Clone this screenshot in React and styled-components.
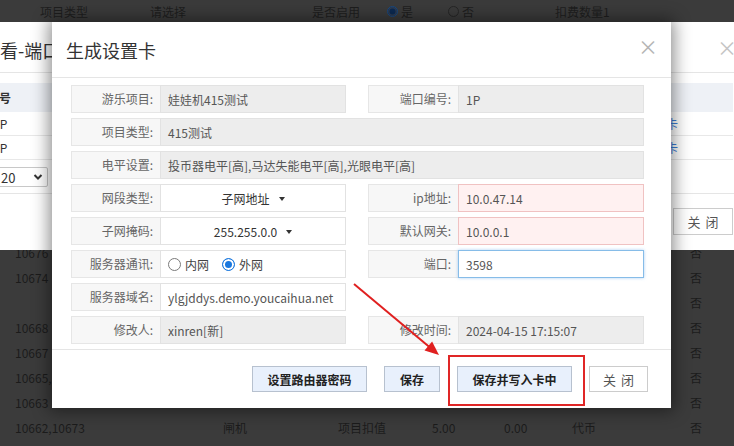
import React from 'react';
import styled, { createGlobalStyle } from 'styled-components';

const FONT = `"Noto Sans CJK SC", "Microsoft YaHei", sans-serif`;

const GlobalStyle = createGlobalStyle`
  html, body { margin: 0; padding: 0; }
  body { background: #3b3b3b; font-family: ${FONT}; font-size: 12px; overflow: hidden; }
  * { box-sizing: border-box; }
`;

const Screen = styled.div`
  position: relative;
  width: 734px;
  height: 446px;
  overflow: hidden;
  background: #3b3b3b;
  color: #1c1c1c;
`;

/* ---------- background page (under overlay) ---------- */
const BgStrip = styled.div`
  height: 22px;
  display: grid;
  grid-template-columns: 40px 110px 162px 75px 61px 107px auto;
  align-items: center;
  color: #1e1e1e;
`;

const StripRadio = styled.span`
  display: inline-flex;
  align-items: center;
  gap: 3px;
`;

const DarkDot = styled.span`
  width: 11px;
  height: 11px;
  border-radius: 50%;
  border: 1px solid ${p => (p.$on ? '#1d4a80' : '#262626')};
  background: ${p => (p.$on ? '#0c2a52' : 'transparent')};
  box-shadow: ${p => (p.$on ? 'inset 0 0 0 1.5px #2f3d52' : 'none')};
`;

const BgTable = styled.div`
  padding-top: 218px;
`;

const BgRow = styled.div`
  height: 25px;
  display: grid;
  grid-template-columns: 15px 208px 115px 94px 72px 68px 118px auto;
  align-items: center;
  color: #1b1b1b;
`;

/* ---------- background dialog ---------- */
const BackDialog = styled.div`
  position: absolute;
  left: -32px;
  top: 22px;
  width: 779px;
  height: 228px;
  background: #fff;
  display: flex;
  flex-direction: column;
`;

const BackHeader = styled.div`
  height: 51px;
  flex: none;
  padding: 5px 10px 0 14px;
  display: flex;
  align-items: center;
  justify-content: space-between;
  border-bottom: 1px solid #e5e5e5;
  font-size: 18px;
  color: #333;
`;

const BackClose = styled.span`
  font-size: 20px;
  color: #c4c4c4;
  margin-bottom: 4px;
`;

const BackBody = styled.div`
  padding: 10px 14px 0;
`;

const BackTable = styled.div`
  display: grid;
  grid-template-columns: 110px 1fr 120px;
`;

const BackCell = styled.div`
  height: ${p => (p.$head ? 29 : 24)}px;
  display: flex;
  align-items: center;
  padding-left: ${p => p.$pad ?? 5}px;
  background: ${p => (p.$head ? '#eef1f6' : '#fff')};
  border-bottom: ${p => (p.$head ? 'none' : '1px solid #e8e8e8')};
  font-weight: ${p => (p.$head ? 'bold' : 'normal')};
  color: #333;
  font-size: 12px;
`;

const BackLink = styled.span`
  color: #3b7dd8;
`;

const Pager = styled.div`
  margin-top: 7px;
  width: 66px;
  height: 20px;
  border: 1px solid #c8c8c8;
  border-radius: 2px;
  display: flex;
  align-items: center;
  padding: 0 4px 0 18px;
  font-size: 13px;
  color: #333;
  justify-content: space-between;
`;

const BackFooter = styled.div`
  margin-top: auto;
  height: 57px;
  border-top: 1px solid #e5e5e5;
  display: flex;
  justify-content: flex-end;
  padding: 14px 14px 0;
`;

/* ---------- front dialog ---------- */
const Dialog = styled.div`
  position: absolute;
  left: 52px;
  top: 22px;
  width: 619px;
  height: 386px;
  background: #fff;
  box-shadow: 0 0 16px 3px rgba(0, 0, 0, 0.45);
  display: flex;
  flex-direction: column;
`;

const DialogHeader = styled.div`
  height: 56px;
  flex: none;
  display: flex;
  align-items: center;
  justify-content: space-between;
  padding: 0 13px 0 14px;
  border-bottom: 1px solid #e5e5e5;
`;

const DialogTitle = styled.h3`
  margin: 0;
  font-size: 18px;
  font-weight: normal;
  color: #333;
`;

const CloseX = styled.span`
  font-size: 20px;
  line-height: 1;
  color: #b4b4b4;
  margin-bottom: 5px;
`;

const FormGrid = styled.div`
  display: grid;
  grid-template-columns: 275px 276px;
  grid-auto-rows: 28px;
  column-gap: 22px;
  row-gap: 5px;
  padding: 7px 27px 5px 19px;
`;

const Field = styled.div`
  display: flex;
  grid-column: ${p => (p.$full ? '1 / -1' : 'auto')};
`;

const Label = styled.div`
  flex: none;
  width: ${p => p.$w}px;
  background: #f7f7f7;
  border: 1px solid #e6e6e6;
  border-right: none;
  text-align: right;
  padding-right: 7px;
  line-height: 26px;
  color: #666;
  white-space: nowrap;
`;

const VARIANTS = {
  readonly: { bg: '#ededed', border: '#e2e2e2', shadow: 'none' },
  plain: { bg: '#fff', border: '#e2e2e2', shadow: 'none' },
  error: { bg: '#fff1f1', border: '#f0c2c2', shadow: 'none' },
  focus: { bg: '#fff', border: '#86bce8', shadow: '0 0 3px rgba(102, 170, 235, 0.55)' },
};

const Value = styled.div`
  flex: 1;
  min-width: 0;
  display: flex;
  align-items: center;
  justify-content: ${p => (p.$center ? 'center' : 'flex-start')};
  gap: ${p => (p.$center ? 9 : 13)}px;
  padding-left: ${p => (p.$center ? 0 : 7)}px;
  background: ${p => VARIANTS[p.$v].bg};
  border: 1px solid ${p => VARIANTS[p.$v].border};
  box-shadow: ${p => VARIANTS[p.$v].shadow};
  color: #555;
  white-space: nowrap;
  overflow: hidden;
`;

const Caret = styled.span`
  width: 0;
  height: 0;
  border-left: 3.5px solid transparent;
  border-right: 3.5px solid transparent;
  border-top: 4px solid #333;
  margin-top: 1px;
`;

const SelectText = styled.span`
  color: #333;
`;

const RadioOption = styled.label`
  display: inline-flex;
  align-items: center;
  gap: 4px;
  color: #444;
`;

const RadioCircle = styled.span`
  width: 13px;
  height: 13px;
  border-radius: 50%;
  border: 1px solid ${p => (p.$on ? '#1a78de' : '#7a7a7a')};
  background: ${p => (p.$on ? '#1a78de' : '#fff')};
  box-shadow: ${p => (p.$on ? 'inset 0 0 0 2px #fff' : 'none')};
`;

const DialogFooter = styled.div`
  height: 59px;
  flex: none;
  border-top: 1px solid #e5e5e5;
  display: flex;
  justify-content: flex-end;
  align-items: center;
  gap: 17px;
  padding-right: 23px;
`;

const Button = styled.button`
  width: ${p => p.$w}px;
  height: ${p => (p.$tall ? 27 : 26)}px;
  padding: 0;
  font-family: ${FONT};
  font-size: ${p => (p.$plain ? 13 : 12)}px;
  font-weight: ${p => (p.$plain ? 'normal' : 'bold')};
  color: ${p => (p.$plain ? '#555' : '#222')};
  background: ${p => (p.$plain ? '#fff' : '#e8f0fc')};
  border: 1px solid ${p => (p.$plain ? '#cccccc' : '#b7c1cf')};
  border-radius: 0;
  word-spacing: 2px;
`;

/* ---------- annotation ---------- */
const Annotation = styled.svg`
  position: absolute;
  left: 0;
  top: 0;
  pointer-events: none;
`;

const Highlight = styled.div`
  position: absolute;
  left: 448px;
  top: 355px;
  width: 137px;
  height: 51px;
  border: 2px solid #e02626;
`;

const bgRows = [
  ['10676', '', '', '', '', '', '否'],
  ['10674', '', '', '', '', '', '否'],
  ['', '', '', '', '', '', '否'],
  ['10668', '', '', '', '', '', '否'],
  ['10667', '', '', '', '', '', '否'],
  ['10665,', '', '', '', '', '', '否'],
  ['10663', '', '', '', '', '', '否'],
  ['10662,10673', '闸机', '项目扣值', '5.00', '0.00', '代币', '否'],
];

function Radio({ on, children }) {
  return (
    <RadioOption>
      <RadioCircle $on={on} />
      {children}
    </RadioOption>
  );
}

export default function App() {
  return (
    <>
      <GlobalStyle />
      <Screen>
        <BgStrip>
          <span />
          <span>项目类型</span>
          <span>请选择</span>
          <span>是否启用</span>
          <StripRadio><DarkDot $on />是</StripRadio>
          <StripRadio><DarkDot />否</StripRadio>
          <span>扣费数量1</span>
        </BgStrip>
        <BgTable>
          {bgRows.map((r, i) => (
            <BgRow key={i}>
              <span />
              {r.map((c, j) => (
                <span key={j}>{c}</span>
              ))}
            </BgRow>
          ))}
        </BgTable>

        <BackDialog>
          <BackHeader>
            <span>查看-端口</span>
            <BackClose>×</BackClose>
          </BackHeader>
          <BackBody>
            <BackTable>
              <BackCell $head>编号</BackCell>
              <BackCell $head>端口名称</BackCell>
              <BackCell $head>操作</BackCell>
              <BackCell $pad={11}>1P</BackCell>
              <BackCell />
              <BackCell><BackLink>生成设置卡</BackLink></BackCell>
              <BackCell $pad={11}>2P</BackCell>
              <BackCell />
              <BackCell><BackLink>生成设置卡</BackLink></BackCell>
            </BackTable>
            <Pager>
              <span>20</span>
              <svg width="10" height="8" viewBox="0 0 10 8">
                <path d="M1.5 2 L5 5.5 L8.5 2" fill="none" stroke="#333" strokeWidth="2" />
              </svg>
            </Pager>
          </BackBody>
          <BackFooter>
            <Button $plain $tall $w={60}>关 闭</Button>
          </BackFooter>
        </BackDialog>

        <Dialog>
          <DialogHeader>
            <DialogTitle>生成设置卡</DialogTitle>
            <CloseX>×</CloseX>
          </DialogHeader>
          <FormGrid>
            <Field>
              <Label $w={89}>游乐项目:</Label>
              <Value $v="readonly">娃娃机415测试</Value>
            </Field>
            <Field>
              <Label $w={90}>端口编号:</Label>
              <Value $v="readonly">1P</Value>
            </Field>
            <Field $full>
              <Label $w={89}>项目类型:</Label>
              <Value $v="readonly">415测试</Value>
            </Field>
            <Field $full>
              <Label $w={89}>电平设置:</Label>
              <Value $v="readonly">投币器电平[高],马达失能电平[高],光眼电平[高]</Value>
            </Field>
            <Field>
              <Label $w={89}>网段类型:</Label>
              <Value $v="plain" $center>
                <SelectText>子网地址</SelectText>
                <Caret />
              </Value>
            </Field>
            <Field>
              <Label $w={90}>ip地址:</Label>
              <Value $v="error">10.0.47.14</Value>
            </Field>
            <Field>
              <Label $w={89}>子网掩码:</Label>
              <Value $v="plain" $center>
                <SelectText>255.255.0.0</SelectText>
                <Caret />
              </Value>
            </Field>
            <Field>
              <Label $w={90}>默认网关:</Label>
              <Value $v="error">10.0.0.1</Value>
            </Field>
            <Field>
              <Label $w={89}>服务器通讯:</Label>
              <Value $v="plain">
                <Radio>内网</Radio>
                <Radio on>外网</Radio>
              </Value>
            </Field>
            <Field>
              <Label $w={90}>端口:</Label>
              <Value $v="focus">3598</Value>
            </Field>
            <Field>
              <Label $w={89}>服务器域名:</Label>
              <Value $v="plain">ylgjddys.demo.youcaihua.net</Value>
            </Field>
            <div />
            <Field>
              <Label $w={89}>修改人:</Label>
              <Value $v="readonly">xinren[新]</Value>
            </Field>
            <Field>
              <Label $w={90}>修改时间:</Label>
              <Value $v="readonly">2024-04-15 17:15:07</Value>
            </Field>
          </FormGrid>
          <DialogFooter>
            <Button $w={115}>设置路由器密码</Button>
            <Button $w={56}>保存</Button>
            <Button $w={115}>保存并写入卡中</Button>
            <Button $plain $w={59}>关 闭</Button>
          </DialogFooter>
        </Dialog>

        <Highlight />
        <Annotation width="734" height="446" viewBox="0 0 734 446">
          <line x1="354" y1="284" x2="430" y2="347.5" stroke="#e02020" strokeWidth="2" />
          <polygon points="439,355 424.5,350.6 432.1,341.4" fill="#e02020" />
        </Annotation>
      </Screen>
    </>
  );
}
